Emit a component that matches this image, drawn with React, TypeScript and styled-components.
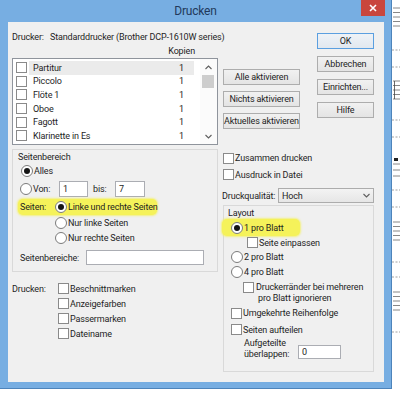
import React from "react";
import styled, { createGlobalStyle } from "styled-components";

const FONT = `Roboto, "Liberation Sans", sans-serif`;

const GlobalStyle = createGlobalStyle`
  * { box-sizing: border-box; }
  html, body { margin: 0; padding: 0; background: #ffffff; }
  body {
    width: 400px; height: 394px; overflow: hidden;
    font-family: ${FONT}; font-size: 9px; letter-spacing: -0.15px; color: #1e1e1e;
  }
`;

const Desktop = styled.div`
  display: flex; align-items: flex-start;
  width: 400px; height: 394px; background: #ffffff;
`;

const Window = styled.div`
  flex: none; width: 392px; height: 389px;
  display: flex; flex-direction: column;
  padding: 0 7px 6px 8px;
  background: #77aee2;
  border-right: 1px solid #4d84bb;
  border-bottom: 1px solid #4d84bb;
`;

const TitleBar = styled.div`
  height: 22px; margin: 0 -7px 0 -8px;
  display: grid; grid-template-columns: 1fr auto 1fr; align-items: start;
`;

const Title = styled.div`
  grid-column: 2; font-size: 12px; letter-spacing: -0.2px; line-height: 23px; color: #22395a;
`;

const CloseButton = styled.div`
  grid-column: 3; justify-self: end; margin-right: 6px;
  width: 24px; height: 16px; background: #c9463d;
  display: flex; align-items: center; justify-content: center;
`;

const Client = styled.div`
  flex: 1; background: #f0f0f0; display: flex; flex-direction: column;
`;

const TopArea = styled.div`
  display: flex; padding: 8px 10px 0 4px;
`;

const TopLeft = styled.div`
  width: 288px; display: flex; flex-direction: column;
`;

const PrinterLine = styled.div`
  height: 14px; display: flex; align-items: center; white-space: nowrap;
`;

const Label = styled.span<{ $w?: number; $ml?: number }>`
  flex: none; white-space: nowrap;
  width: ${(p) => (p.$w ? `${p.$w}px` : "auto")};
  margin-left: ${(p) => p.$ml ?? 0}px;
`;

const CopiesHeader = styled.div`
  width: 206px; height: 14px; display: flex; align-items: center;
  justify-content: flex-end; padding-right: 23px;
`;

const ListRow = styled.div`
  display: flex; gap: 5px;
`;

const ListBox = styled.div`
  width: 206px; height: 87px; border: 1px solid #8f949c; background: #ffffff;
  display: flex; overflow: hidden;
`;

const ListRows = styled.div`
  flex: 1; padding-top: 2px; overflow: hidden;
`;

const ListItem = styled.div`
  height: 13.6px; display: flex; align-items: center; padding-left: 3px;
`;

const ItemCell = styled.div<{ $selected?: boolean }>`
  flex: 1; height: 100%; margin: 0 6px 0 2px; padding: 0 10px 0 4px;
  display: flex; align-items: center; justify-content: space-between;
  background: ${(p) => (p.$selected ? "#ebebeb" : "transparent")};
`;

const ScrollBar = styled.div`
  width: 17px; display: flex; flex-direction: column; background: #fbfbfb;
`;

const ScrollArrow = styled.div`
  height: 16px; display: flex; align-items: center; justify-content: center;
`;

const ScrollTrack = styled.div`
  flex: 1; padding-left: 2px;
`;

const ScrollThumb = styled.div`
  width: 12px; height: 13px; background: #cdcdcd;
`;

const ButtonColumn = styled.div<{ $w: number; $gap: number; $top: number; $ml?: number }>`
  flex: none; width: ${(p) => p.$w}px; margin-left: ${(p) => p.$ml ?? 0}px;
  display: flex; flex-direction: column;
  gap: ${(p) => p.$gap}px; padding-top: ${(p) => p.$top}px;
`;

const Button = styled.button<{ $default?: boolean }>`
  height: 16px; width: 100%; padding: 0; margin: 0;
  font-family: ${FONT}; font-size: 9px; letter-spacing: -0.15px; color: #1e1e1e;
  background: ${(p) =>
    p.$default ? "linear-gradient(#eef2f7, #e2e8ef)" : "linear-gradient(#f1f1f1, #e4e4e4)"};
  border: 1px solid ${(p) => (p.$default ? "#5b9fe0" : "#adadad")};
  display: flex; align-items: center; justify-content: center; white-space: nowrap;
`;

const BottomArea = styled.div`
  display: flex; gap: 4px; padding: 4px 10px 0 4px;
`;

const Column = styled.div<{ $w: number }>`
  flex: none; width: ${(p) => p.$w}px; display: flex; flex-direction: column;
`;

const GroupBox = styled.div<{ $h: number; $ml?: number; $mt?: number }>`
  flex: none; height: ${(p) => p.$h}px;
  margin-left: ${(p) => p.$ml ?? 0}px; margin-top: ${(p) => p.$mt ?? 0}px;
  border: 1px solid #d9d9d9; display: flex; flex-direction: column;
`;

const Line = styled.div<{ $h: number; $pl?: number; $mt?: number; $top?: boolean; $pt?: number }>`
  flex: none; height: ${(p) => p.$h}px;
  padding-left: ${(p) => p.$pl ?? 0}px; padding-top: ${(p) => p.$pt ?? 0}px;
  margin-top: ${(p) => p.$mt ?? 0}px;
  display: flex; align-items: ${(p) => (p.$top ? "flex-start" : "center")};
  white-space: nowrap;
`;

const Marker = styled.span<{ $w: number; $pl: number; $ml?: number }>`
  flex: none; width: ${(p) => p.$w}px; height: 100%;
  margin-left: ${(p) => p.$ml ?? 0}px; padding-left: ${(p) => p.$pl}px;
  display: flex; align-items: center;
  background: #f5f25a; border-radius: 5px;
  box-shadow: 0 0 2px 1px rgba(245, 242, 90, 0.75);
`;

const Choice = styled.span`
  display: flex; align-items: center; gap: 1px; white-space: nowrap;
`;

const CheckBox = styled.span`
  flex: none; width: 11px; height: 11px;
  border: 1px solid #8a8a8a; background: #ffffff;
`;

const RadioDot = styled.span<{ $checked?: boolean }>`
  flex: none; width: 12px; height: 12px; border-radius: 50%;
  border: 1px solid #7b7b7b; background: #ffffff;
  display: flex; align-items: center; justify-content: center;
  &::after {
    content: ""; width: 6px; height: 6px; border-radius: 50%;
    background: #151515; display: ${(p) => (p.$checked ? "block" : "none")};
  }
`;

const Field = styled.div<{ $w: number; $h: number; $mt?: number }>`
  flex: none; width: ${(p) => p.$w}px; height: ${(p) => p.$h}px;
  margin-top: ${(p) => p.$mt ?? 0}px;
  border: 1px solid #abadb3; background: #ffffff;
  padding-left: 3px; display: flex; align-items: center;
`;

const Select = styled.div`
  flex: none; width: 96px; height: 15px; border: 1px solid #acacac;
  background: linear-gradient(#f3f3f3, #e6e6e6);
  display: flex; align-items: center; justify-content: space-between;
  padding: 0 3px 0 3px;
`;

const PrintSection = styled.div`
  display: grid; grid-template-columns: 46px auto; margin-top: 9px;
`;

const Stack = styled.div`
  display: flex; flex-direction: column;
`;

const TwoLines = styled.span<{ $lh: number; $w?: number; $ml?: number }>`
  flex: none; display: block; white-space: normal;
  line-height: ${(p) => p.$lh}px; width: ${(p) => (p.$w ? `${p.$w}px` : "auto")};
  margin-left: ${(p) => p.$ml ?? 0}px;
`;

const ScoreStrip = styled.svg`
  flex: none; display: block;
`;

const Chevron = ({ up, color = "#5f5f5f" }: { up?: boolean; color?: string }) => (
  <svg width="7" height="5" viewBox="0 0 7 5">
    <polyline
      points={up ? "0.5,4 3.5,1 6.5,4" : "0.5,1 3.5,4 6.5,1"}
      fill="none"
      stroke={color}
      strokeWidth="1.1"
    />
  </svg>
);

const Check = ({ children }: { children?: React.ReactNode }) => (
  <Choice>
    <CheckBox />
    {children}
  </Choice>
);

const Radio = ({ checked, children }: { checked?: boolean; children?: React.ReactNode }) => (
  <Choice>
    <RadioDot $checked={checked} />
    {children}
  </Choice>
);

const parts = ["Partitur", "Piccolo", "Flöte 1", "Oboe", "Fagott", "Klarinette in Es"];

const staffs = [8, 81, 222, 292];
const dashes = [50, 67, 120, 137, 190, 207, 262, 277, 332];

export default function App() {
  return (
    <>
      <GlobalStyle />
      <Desktop>
        <Window>
          <TitleBar>
            <Title>Drucken</Title>
            <CloseButton>
              <svg width="8" height="8" viewBox="0 0 8 8">
                <path d="M1 1 L7 7 M7 1 L1 7" stroke="#ffffff" strokeWidth="1.6" />
              </svg>
            </CloseButton>
          </TitleBar>
          <Client>
            <TopArea>
              <TopLeft>
                <PrinterLine>
                  <Label $w={38}>Drucker:</Label>
                  <Label>Standarddrucker (Brother DCP-1610W series)</Label>
                </PrinterLine>
                <CopiesHeader>Kopien</CopiesHeader>
                <ListRow>
                  <ListBox>
                    <ListRows>
                      {parts.map((name, i) => (
                        <ListItem key={name}>
                          <CheckBox />
                          <ItemCell $selected={i === 0}>
                            <span>{name}</span>
                            <span>1</span>
                          </ItemCell>
                        </ListItem>
                      ))}
                      <ListItem>
                        <CheckBox />
                      </ListItem>
                    </ListRows>
                    <ScrollBar>
                      <ScrollArrow>
                        <Chevron up />
                      </ScrollArrow>
                      <ScrollTrack>
                        <ScrollThumb />
                      </ScrollTrack>
                      <ScrollArrow>
                        <Chevron />
                      </ScrollArrow>
                    </ScrollBar>
                  </ListBox>
                  <ButtonColumn $w={77} $gap={6} $top={11}>
                    <Button>Alle aktivieren</Button>
                    <Button>Nichts aktivieren</Button>
                    <Button>Aktuelles aktivieren</Button>
                  </ButtonColumn>
                </ListRow>
              </TopLeft>
              <ButtonColumn $w={57} $gap={7} $top={3} $ml={17}>
                <Button $default>OK</Button>
                <Button>Abbrechen</Button>
                <Button>Einrichten...</Button>
                <Button>Hilfe</Button>
              </ButtonColumn>
            </TopArea>

            <BottomArea>
              <Column $w={206}>
                <GroupBox $h={123}>
                  <Line $h={13} $pl={5}>
                    Seitenbereich
                  </Line>
                  <Line $h={15} $pl={8}>
                    <Radio checked>Alles</Radio>
                  </Line>
                  <Line $h={21} $pl={7}>
                    <RadioDot />
                    <Label $w={26} $ml={1}>Von:</Label>
                    <Field $w={29} $h={16}>1</Field>
                    <Label $w={22} $ml={5}>bis:</Label>
                    <Field $w={30} $h={16}>7</Field>
                  </Line>
                  <Line $h={16} $pl={5}>
                    <Marker $w={139} $pl={2}>
                      <Label $w={35}>Seiten:</Label>
                      <Radio checked>Linke und rechte Seiten</Radio>
                    </Marker>
                  </Line>
                  <Line $h={15} $pl={42}>
                    <Radio>Nur linke Seiten</Radio>
                  </Line>
                  <Line $h={16} $pl={42}>
                    <Radio>Nur rechte Seiten</Radio>
                  </Line>
                  <Line $h={19} $pl={7} $mt={2}>
                    <Label $w={66}>Seitenbereiche:</Label>
                    <Field $w={118} $h={15} />
                  </Line>
                </GroupBox>
                <PrintSection>
                  <Line $h={15}>Drucken:</Line>
                  <Stack>
                    <Line $h={15}>
                      <Check>Beschnittmarken</Check>
                    </Line>
                    <Line $h={15}>
                      <Check>Anzeigefarben</Check>
                    </Line>
                    <Line $h={15}>
                      <Check>Passermarken</Check>
                    </Line>
                    <Line $h={15}>
                      <Check>Dateiname</Check>
                    </Line>
                  </Stack>
                </PrintSection>
              </Column>

              <Column $w={152}>
                <Line $h={16} $pl={1} $mt={1}>
                  <Check>Zusammen drucken</Check>
                </Line>
                <Line $h={17} $pl={1}>
                  <Check>Ausdruck in Datei</Check>
                </Line>
                <Line $h={15} $mt={5}>
                  <Label $w={56}>Druckqualität:</Label>
                  <Select>
                    <span>Hoch</span>
                    <Chevron />
                  </Select>
                </Line>
                <GroupBox $h={167} $ml={1} $mt={2}>
                  <Line $h={13} $pl={4}>
                    Layout
                  </Line>
                  <Line $h={17}>
                    <Marker $w={78} $pl={9} $ml={-2}>
                      <Radio checked>1 pro Blatt</Radio>
                    </Marker>
                  </Line>
                  <Line $h={13} $pl={23}>
                    <Check>Seite einpassen</Check>
                  </Line>
                  <Line $h={15} $pl={7}>
                    <Radio>2 pro Blatt</Radio>
                  </Line>
                  <Line $h={16} $pl={7}>
                    <Radio>4 pro Blatt</Radio>
                  </Line>
                  <Line $h={25} $pl={19} $pt={1.5} $top>
                    <CheckBox />
                    <TwoLines $lh={11} $ml={2}>
                      Druckerränder bei mehreren
                      <br />
                      &nbsp;pro Blatt ignorieren
                    </TwoLines>
                  </Line>
                  <Line $h={16} $pl={7}>
                    <Check>Umgekehrte Reihenfolge</Check>
                  </Line>
                  <Line $h={17} $pl={7}>
                    <Check>Seiten aufteilen</Check>
                  </Line>
                  <Line $h={22} $pl={20} $top>
                    <TwoLines $lh={10.5} $w={54}>
                      Aufgeteilte
                      <br />
                      überlappen:
                    </TwoLines>
                    <Field $w={43} $h={14} $mt={7}>
                      0
                    </Field>
                  </Line>
                </GroupBox>
              </Column>
            </BottomArea>
          </Client>
        </Window>
        <ScoreStrip width="8" height="394" viewBox="0 0 8 394">
          {staffs.map((y) =>
            [0, 4.5, 9, 13.5, 18].map((d) => (
              <line key={`${y}-${d}`} x1="1" x2="8" y1={y + d} y2={y + d} stroke="#6a6a6a" strokeWidth="0.8" />
            ))
          )}
          <line x1="2.5" x2="2.5" y1="81" y2="99" stroke="#444" strokeWidth="0.8" />
          {dashes.map((y) => (
            <line key={y} x1="0" x2="8" y1={y} y2={y} stroke="#8a8a8a" strokeWidth="0.8" strokeDasharray="2 1.5" />
          ))}
          <rect x="2" y="158" width="4" height="3" fill="#222" />
          <line x1="1" x2="8" y1="164" y2="164" stroke="#6a6a6a" strokeWidth="0.8" />
          <line x1="1" x2="8" y1="170" y2="170" stroke="#6a6a6a" strokeWidth="0.8" />
          <line x1="1" x2="8" y1="176" y2="176" stroke="#6a6a6a" strokeWidth="0.8" />
        </ScoreStrip>
      </Desktop>
    </>
  );
}
